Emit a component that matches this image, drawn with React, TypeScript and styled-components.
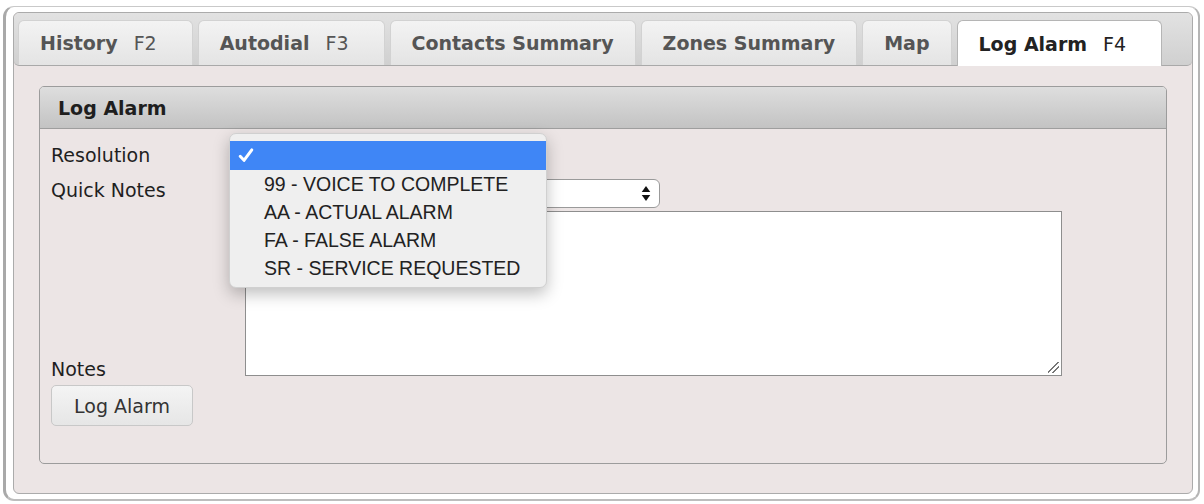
import React from "react";
import styled, { createGlobalStyle } from "styled-components";

const GlobalStyle = createGlobalStyle`
  html, body {
    margin: 0;
    padding: 0;
    background: #ffffff;
  }
  body {
    font-family: "DejaVu Sans", Verdana, sans-serif;
  }
`;

type Tab = {
  label: string;
  hotkey?: string;
  active?: boolean;
};

const tabs: Tab[] = [
  { label: "History", hotkey: "F2" },
  { label: "Autodial", hotkey: "F3" },
  { label: "Contacts Summary" },
  { label: "Zones Summary" },
  { label: "Map" },
  { label: "Log Alarm", hotkey: "F4", active: true },
];

const resolutions = [
  "99 - VOICE TO COMPLETE",
  "AA - ACTUAL ALARM",
  "FA - FALSE ALARM",
  "SR - SERVICE REQUESTED",
];

const App = () => {
  return (
    <>
      <GlobalStyle />
      <Frame>
        <TabsWidget>
          <TabNav>
            {tabs.map((tab) => (
              <TabItem key={tab.label} $active={tab.active}>
                {tab.label}
                {tab.hotkey && <Hotkey>{tab.hotkey}</Hotkey>}
              </TabItem>
            ))}
          </TabNav>
          <TabContent>
            <Panel>
              <PanelHeader>Log Alarm</PanelHeader>
              <PanelBody>
                <FormRow>
                  <Label>Resolution</Label>
                  <Field>
                    <SelectBox $width={300} />
                    <Popup>
                      <PopupOption $selected>
                        <Check viewBox="0 0 16 16">
                          <path d="M2.2 8.8 L6 12.8 L13.8 2.4" />
                        </Check>
                      </PopupOption>
                      {resolutions.map((item) => (
                        <PopupOption key={item}>{item}</PopupOption>
                      ))}
                    </Popup>
                  </Field>
                </FormRow>
                <FormRow $gap={6}>
                  <Label>Quick Notes</Label>
                  <Field>
                    <SelectBox $width={415}>
                      <Arrows viewBox="0 0 10 18">
                        <path d="M5 1 L9.5 7.5 L0.5 7.5 Z" />
                        <path d="M5 17 L9.5 10.5 L0.5 10.5 Z" />
                      </Arrows>
                    </SelectBox>
                  </Field>
                </FormRow>
                <NotesRow>
                  <NotesLabel>Notes</NotesLabel>
                  <NotesArea />
                </NotesRow>
                <Button>Log Alarm</Button>
              </PanelBody>
            </Panel>
          </TabContent>
        </TabsWidget>
      </Frame>
    </>
  );
};

export default App;

const Frame = styled.div`
  box-sizing: border-box;
  margin: 6px 0 0 3px;
  width: 1197px;
  height: 495px;
  padding: 5px 4px 3px 7px;
  border: 1px solid #c9c9c9;
  border-left: 3px solid #a9a9a9;
  border-right: 2px solid #b5b5b5;
  border-bottom: 2px solid #bdbdbd;
  border-radius: 11px;
  background: #ffffff;
`;

const TabsWidget = styled.div`
  box-sizing: border-box;
  width: 1180px;
  height: 482px;
  display: flex;
  flex-direction: column;
  border: 1px solid #ababab;
  border-radius: 6px;
  background: #ece5e5;
  overflow: hidden;
`;

const TabNav = styled.div`
  display: flex;
  align-items: flex-end;
  gap: 5px;
  height: 52px;
  padding: 0 0 0 4px;
  background: linear-gradient(#e2e2e2, #d0d0d0);
  border-bottom: 1px solid #a9a9a9;
  border-radius: 5px;
`;

const TabItem = styled.div<{ $active?: boolean }>`
  box-sizing: border-box;
  display: flex;
  align-items: center;
  height: ${(p) => (p.$active ? "46px" : "45px")};
  margin-bottom: ${(p) => (p.$active ? "-1px" : "0")};
  padding: 0 21px;
  border: 1px solid ${(p) => (p.$active ? "#b5b5b5" : "#d2d2d2")};
  border-bottom: none;
  border-radius: 6px 6px 0 0;
  background: ${(p) =>
    p.$active ? "#ffffff" : "linear-gradient(#f3f3f3, #e4e4e4)"};
  color: ${(p) => (p.$active ? "#222222" : "#555555")};
  font-family: "DejaVu Sans", Verdana, sans-serif;
  font-weight: bold;
  font-size: 19px;
  white-space: nowrap;
`;

const Hotkey = styled.span`
  margin-left: 16px;
  padding-right: 14px;
  font-weight: normal;
`;

const TabContent = styled.div`
  flex: 1;
  padding: 20px 25px 29px 25px;
  display: flex;
`;

const Panel = styled.div`
  flex: 1;
  display: flex;
  flex-direction: column;
  border: 1px solid #9c9c9c;
  border-radius: 5px;
  background: #ece5e5;
`;

const PanelHeader = styled.div`
  height: 41px;
  display: flex;
  align-items: center;
  padding-left: 18px;
  border-bottom: 1px solid #9e9e9e;
  border-radius: 4px 4px 0 0;
  background: linear-gradient(#dedede, #c3c3c3);
  color: #1e1e1e;
  font-weight: bold;
  font-size: 19px;
`;

const PanelBody = styled.div`
  padding: 15px 11px 0 11px;
  display: flex;
  flex-direction: column;
  align-items: flex-start;
`;

const FormRow = styled.div<{ $gap?: number }>`
  display: flex;
  align-items: flex-start;
  margin-top: ${(p) => p.$gap ?? 0}px;
`;

const NotesRow = styled.div`
  display: flex;
  align-items: flex-end;
  margin-top: 3px;
`;

const Label = styled.div`
  width: 194px;
  color: #1f1f1f;
  font-size: 19px;
  line-height: 22px;
`;

const NotesLabel = styled(Label)`
  margin-bottom: -4px;
`;

const Field = styled.div`
  position: relative;
  height: 29px;
`;

const SelectBox = styled.div<{ $width: number }>`
  box-sizing: border-box;
  position: relative;
  width: ${(p) => p.$width}px;
  height: 29px;
  border: 1px solid #9a9a9a;
  border-radius: 6px;
  background: #ffffff;
`;

const Arrows = styled.svg`
  position: absolute;
  right: 8px;
  top: 5px;
  width: 10px;
  height: 17px;
  fill: #111111;
`;

const NotesArea = styled.div`
  box-sizing: border-box;
  position: relative;
  width: 817px;
  height: 165px;
  border: 1px solid #8e8e8e;
  background: #ffffff;
  &::after {
    content: "";
    position: absolute;
    right: 2px;
    bottom: 2px;
    width: 11px;
    height: 11px;
    background: linear-gradient(
      135deg,
      transparent 0 45%,
      #777 45% 53%,
      transparent 53% 68%,
      #777 68% 76%,
      transparent 76%
    );
  }
`;

const Button = styled.div`
  box-sizing: border-box;
  margin-top: 9px;
  width: 142px;
  height: 41px;
  display: flex;
  align-items: center;
  justify-content: center;
  border: 1px solid #c8c8c8;
  border-radius: 5px;
  background: linear-gradient(#f4f4f4, #e6e6e6);
  color: #333333;
  font-size: 19px;
`;

const Popup = styled.div`
  position: absolute;
  left: -16px;
  top: -11px;
  width: 316px;
  padding: 7px 0 5px 0;
  border-radius: 7px;
  border: 1px solid #d0d0d0;
  background: #efefef;
  box-shadow: 0 6px 16px rgba(0, 0, 0, 0.25);
  z-index: 10;
`;

const PopupOption = styled.div<{ $selected?: boolean }>`
  position: relative;
  height: ${(p) => (p.$selected ? "29px" : "28px")};
  display: flex;
  align-items: center;
  padding-left: 34px;
  background: ${(p) => (p.$selected ? "#3f86f6" : "transparent")};
  color: #222222;
  font-family: "Liberation Sans", Arial, sans-serif;
  font-size: 19.5px;
  white-space: nowrap;
`;

const Check = styled.svg`
  position: absolute;
  left: 8px;
  top: 6px;
  width: 16px;
  height: 17px;
  fill: none;
  stroke: #ffffff;
  stroke-width: 3;
  stroke-linecap: round;
  stroke-linejoin: round;
`;
